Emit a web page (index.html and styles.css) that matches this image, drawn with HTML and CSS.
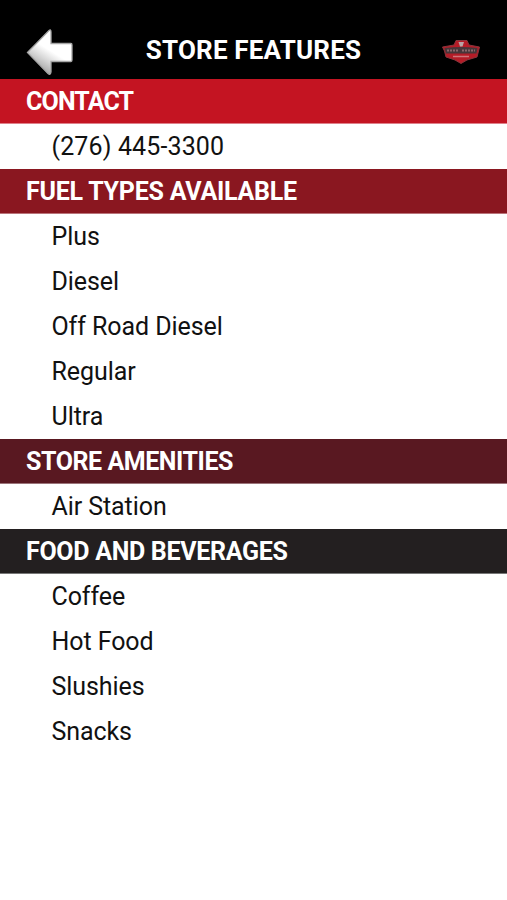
FILE: index.html
```html
<!DOCTYPE html>
<html lang="en">
<head>
<meta charset="utf-8">
<title>Store Features</title>
<link rel="stylesheet" href="styles.css">
</head>
<body>
<header class="bar">
  <svg class="back" viewBox="0 0 48 48" role="img" aria-label="Back">
    <defs><linearGradient id="metal" gradientUnits="userSpaceOnUse" x1="11" y1="43" x2="27" y2="17"><stop offset="0" stop-color="#999"/><stop offset=".45" stop-color="#d5d5d5"/><stop offset=".8" stop-color="#fff"/></linearGradient></defs>
    <path d="M1.5 24.5 23 2.5Q25 1 25 4V15.500H45Q46 15.500 46 17V32Q46 33.500 45 33.500H25V44Q24.500 47.500 22 45.500Z" fill="url(#metal)" stroke="#a6a6a6" stroke-width="1.300"/>
  </svg>
  <h1 class="title">STORE FEATURES</h1>
  <svg class="logo" viewBox="0 0 40 26" aria-hidden="true">
    <path d="M1.500 8 13 6 15 1.500H26L28 6 38.500 8 37.500 12 36 18 26 21 20 24.500 14 21 5 18 3.500 12Z" fill="#b51c27" stroke="#87353c"/>
    <path d="M3.500 9Q20 7 36.500 9L35.500 14.500H5Z" fill="#47363a"/>
    <path d="M6 11.500H17M21 11.500H34" stroke="#8b686b" stroke-width="2" stroke-dasharray="2 1"/>
    <path d="M17.500 3H23L21.500 7.500H19Z" fill="#b8a5a7"/>
    <path d="M12 17.500H28" stroke="#d0747a" stroke-width="1.500"/>
  </svg>
</header>
<main>
<h2 class="head contact">CONTACT</h2>
<ul class="list phone"><li>(276) 445-3300</li></ul>
<h2 class="head fuel">FUEL TYPES AVAILABLE</h2>
<ul class="list"><li>Plus</li><li>Diesel</li><li>Off Road Diesel</li><li>Regular</li><li>Ultra</li></ul>
<h2 class="head amenities">STORE AMENITIES</h2>
<ul class="list"><li>Air Station</li></ul>
<h2 class="head food">FOOD AND BEVERAGES</h2>
<ul class="list"><li>Coffee</li><li>Hot Food</li><li>Slushies</li><li>Snacks</li></ul>
</main>
</body>
</html>
```
FILE: styles.css
```css
body { margin: 0; background: #fff; color: #111; font-family: Roboto, sans-serif; font-size: 25px; }
.bar { box-sizing: border-box; height: 79px; padding: 28px 26px 0; background: #000; color: #fff; display: grid; grid-template-columns: 1fr auto 1fr; }
.back { width: 48px; height: 48px; }
.title { margin: 0; font-size: 26px; font-weight: 700; line-height: 45px; letter-spacing: .18px; }
.logo { width: 40px; height: 26px; margin-top: 11px; justify-self: end; }
.head { box-sizing: border-box; margin: 0; height: 45px; padding: 1px 0 0 26px; border-bottom: 1px solid; line-height: 44px; font-size: 25px; font-weight: 700; letter-spacing: -.4px; color: #fff; }
.contact { background: #c41422; border-color: #df808a; letter-spacing: -.85px; }
.fuel { background: #8a1720; border-color: #b9747a; letter-spacing: -.24px; }
.amenities { background: #591821; border-color: #9b747a; letter-spacing: -.44px; }
.food { background: #231f20; border-color: #777; letter-spacing: -.3px; }
.list { margin: 0; padding: 0 0 0 51.500px; list-style: none; line-height: 45px; letter-spacing: -.08px; }
.phone { letter-spacing: .13px; }
```
